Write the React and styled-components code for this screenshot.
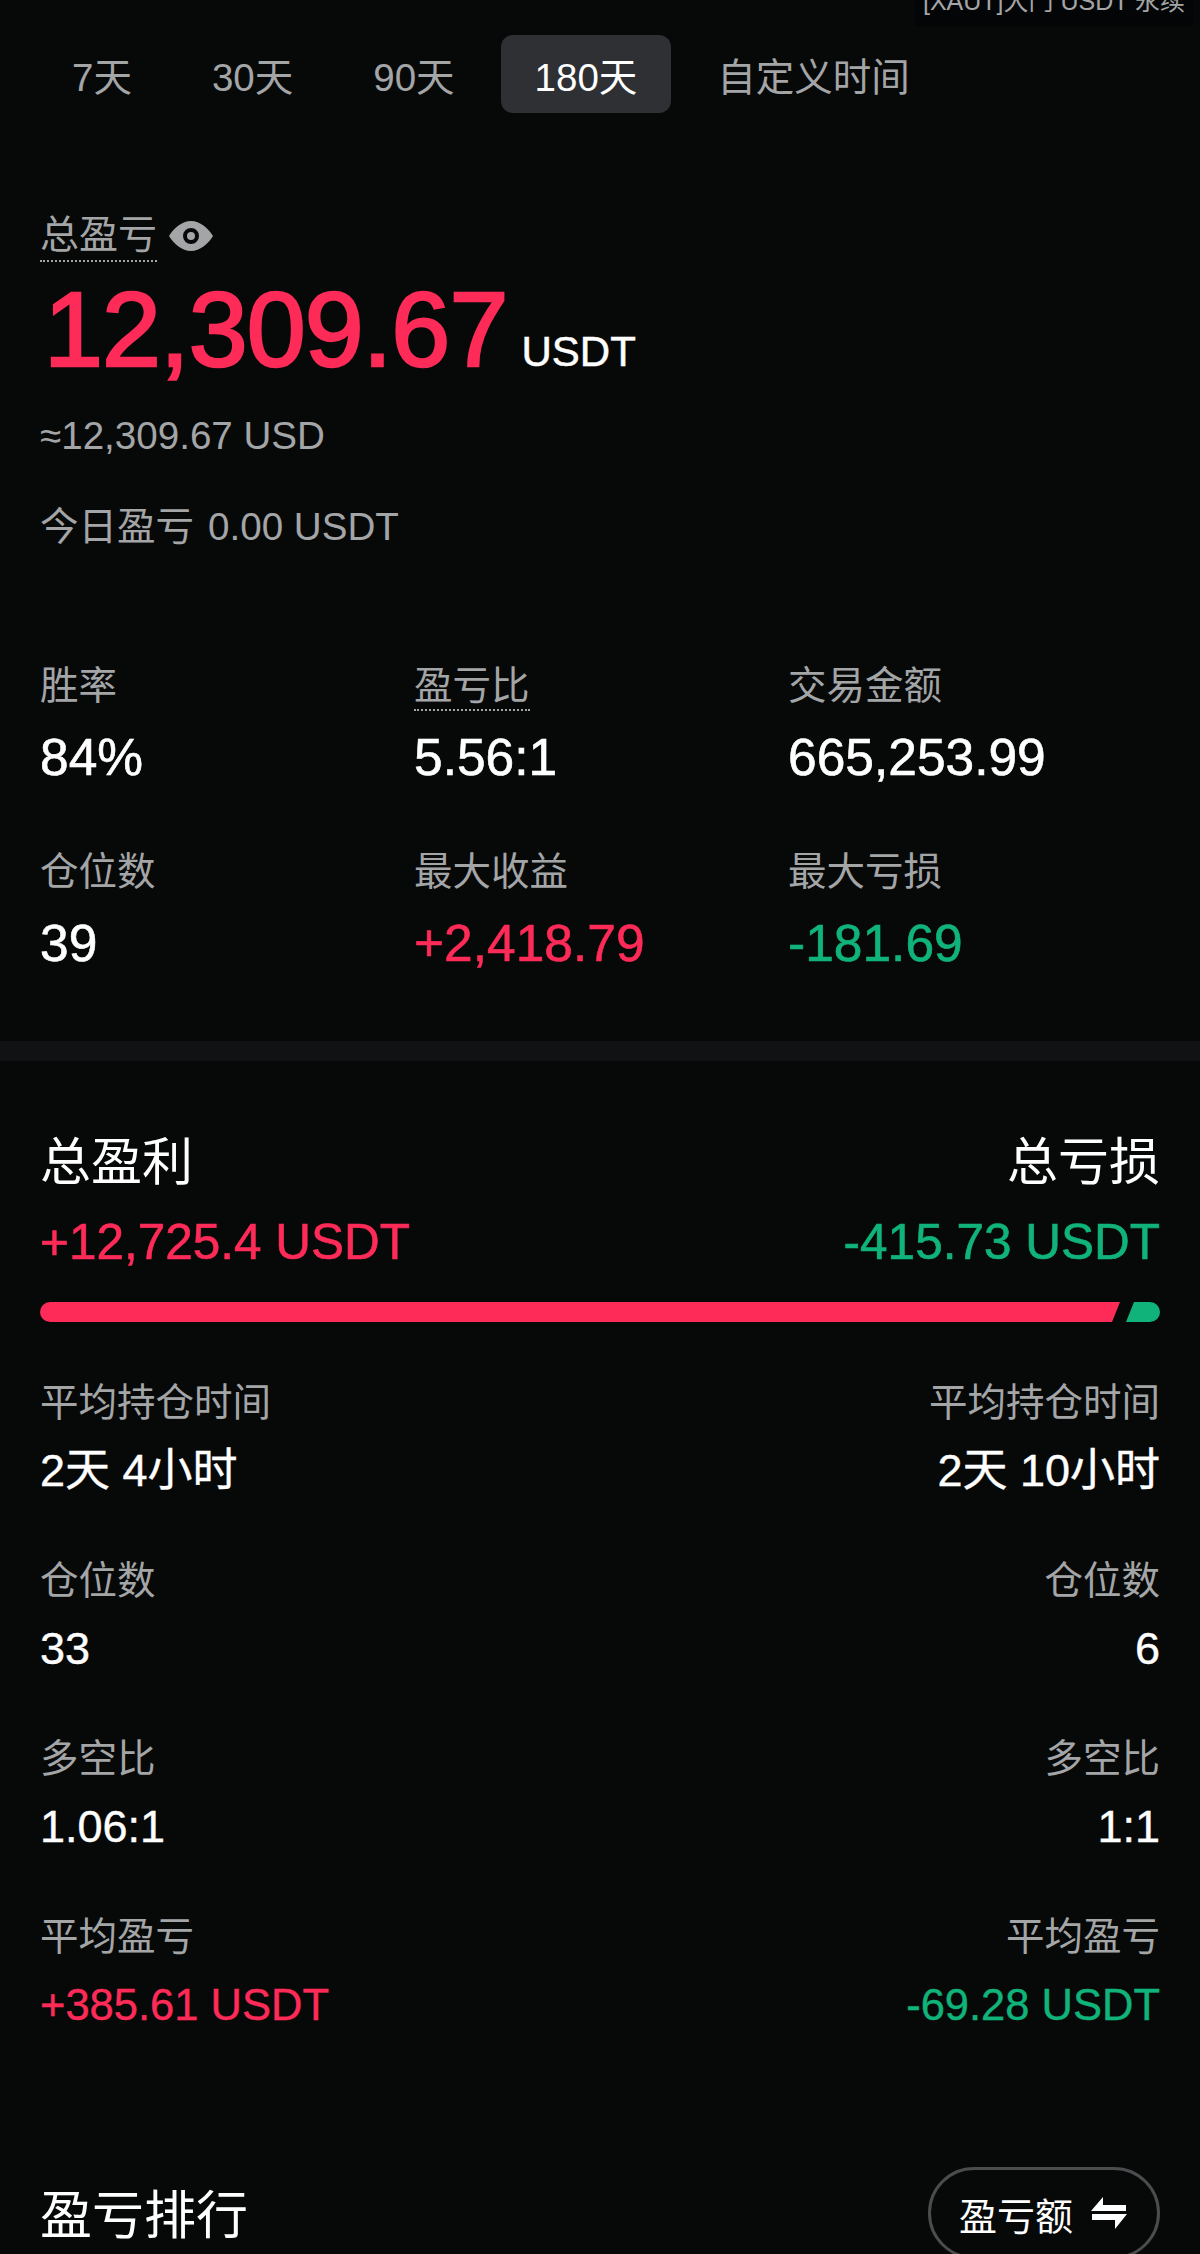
import React from 'react';
import styled, { createGlobalStyle } from 'styled-components';

const RED = '#fe2b58';
const GREEN = '#10b47a';
const GREY = '#a3a5a7';
const BG = '#070909';

const GlobalStyle = createGlobalStyle`
  html, body { margin: 0; padding: 0; background: ${BG}; }
  * { box-sizing: border-box; }
`;

const Page = styled.div`
  position: relative;
  width: 1200px;
  height: 2254px;
  overflow: hidden;
  background: ${BG};
  color: #fff;
  font-family: "Liberation Sans", "Noto Sans CJK SC", sans-serif;
`;

const ContractTag = styled.div`
  position: absolute;
  top: -14px;
  right: 7px;
  padding: 0 8px 10px;
  background: #040506;
  color: ${GREY};
  font-size: 25px;
  line-height: 30px;
`;

const Tabs = styled.div`
  display: flex;
  align-items: center;
  gap: 12px;
  padding: 35px 0 0 38px;
  height: 113px;
`;

const Tab = styled.div`
  height: 78px;
  padding: 0 34px;
  display: flex;
  align-items: center;
  border-radius: 12px;
  font-size: 38.5px;
  color: ${p => (p.$active ? '#fff' : GREY)};
  background: ${p => (p.$active ? '#2e3033' : 'transparent')};
`;

const Summary = styled.section`
  padding: 97px 40px 0;
`;

const TitleRow = styled.div`
  display: flex;
  align-items: center;
  gap: 12px;
`;

const DottedLabel = styled.span`
  display: inline-block;
  color: ${GREY};
  font-size: 39px;
  line-height: 50px;
  border-bottom: 2px dotted ${GREY};
`;

const Total = styled.div`
  display: flex;
  align-items: baseline;
  margin-top: 12px;
  height: 110px;
  padding-left: 4px;
`;

const TotalNumber = styled.span`
  color: ${RED};
  font-size: 106px;
  line-height: 110px;
  letter-spacing: -0.9px;
  -webkit-text-stroke: 2.5px currentColor;
`;

const TotalUnit = styled.span`
  margin-left: 14px;
  font-size: 42px;
  -webkit-text-stroke: 0.5px currentColor;
`;

const SubLine = styled.div`
  margin-top: ${p => p.$top}px;
  color: ${GREY};
  font-size: 38.6px;
  line-height: 44px;
`;

const TodayLabel = styled.span`
  font-size: 38.5px;
  margin-right: 14px;
`;

const StatGrid = styled.div`
  display: grid;
  grid-template-columns: 374px 374px 1fr;
  row-gap: 62px;
  margin-top: 112px;
`;

const StatLabel = styled.div`
  color: ${GREY};
  font-size: 38.5px;
  line-height: 50px;
  height: 50px;
`;

const DottedStat = styled.span`
  display: inline-block;
  height: 50px;
  border-bottom: 2px dotted ${GREY};
`;

const StatValue = styled.div`
  margin-top: 18px;
  font-size: 51.5px;
  line-height: 56px;
  color: ${p => p.$color || '#fff'};
  -webkit-text-stroke: 0.6px currentColor;
`;

const Band = styled.div`
  height: 20px;
  margin-top: 70px;
  background: #101213;
`;

const Compare = styled.section`
  padding: 70px 40px 0;
`;

const CompareRow = styled.div`
  display: flex;
  justify-content: space-between;
  margin-top: ${p => p.$top || 0}px;
`;

const Side = styled.div`
  text-align: ${p => (p.$right ? 'right' : 'left')};
`;

const SideTitle = styled.div`
  font-size: 51px;
  line-height: 64px;
`;

const SideAmount = styled.div`
  margin-top: 18px;
  font-size: 49.5px;
  line-height: 58px;
  color: ${p => p.$color};
  -webkit-text-stroke: 0.6px currentColor;
`;

const Bar = styled.div`
  display: flex;
  gap: 6px;
  height: 20px;
  margin-top: 31px;
`;

const BarGain = styled.div`
  flex: 1;
  background: ${RED};
  border-radius: 10px 0 0 10px;
  clip-path: polygon(0 0, 100% 0, calc(100% - 8px) 100%, 0 100%);
`;

const BarLoss = styled.div`
  width: 34px;
  background: ${GREEN};
  border-radius: 0 10px 10px 0;
  clip-path: polygon(8px 0, 100% 0, 100% 100%, 0 100%);
`;

const DetailLabel = styled.div`
  color: ${GREY};
  font-size: 38.5px;
  line-height: 50px;
`;

const DetailValue = styled.div`
  margin-top: 18px;
  font-size: ${p => (p.$color ? 43.5 : 45)}px;
  line-height: 50px;
  color: ${p => p.$color || '#fff'};
  -webkit-text-stroke: 0.4px currentColor;
`;

const RankHeader = styled.div`
  display: flex;
  align-items: center;
  justify-content: space-between;
  margin-top: 137px;
  height: 92px;
`;

const RankTitle = styled.div`
  margin-bottom: 4px;
  font-size: 52px;
`;

const SortButton = styled.div`
  display: flex;
  align-items: center;
  gap: 18px;
  height: 92px;
  width: 232px;
  padding-left: 28px;
  border: 3px solid #4a4c4e;
  border-radius: 46px;
  font-size: 38px;
`;

const EyeIcon = () => (
  <svg width="44" height="30" viewBox="0 0 44 30">
    <path fill={GREY} fillRule="evenodd" d="M0 15C5 7 13 0 22 0s17 7 22 15c-5 8-13 15-22 15S5 23 0 15Zm22-8a8 8 0 1 0 0 16 8 8 0 0 0 0-16Zm0 4a4 4 0 1 1 0 8 4 4 0 0 1 0-8Z" />
  </svg>
);

const SwapIcon = () => (
  <svg width="36" height="32" viewBox="0 0 36 32">
    <path fill="#fff" d="M12 0v8h23v6H0L12 0ZM1 17h35L24 32v-9H1v-6Z" />
  </svg>
);

const tabs = ['7天', '30天', '90天', '180天', '自定义时间'];

const stats = [
  { label: '胜率', value: '84%' },
  { label: '盈亏比', value: '5.56:1', dotted: true },
  { label: '交易金额', value: '665,253.99' },
  { label: '仓位数', value: '39' },
  { label: '最大收益', value: '+2,418.79', color: RED },
  { label: '最大亏损', value: '-181.69', color: GREEN },
];

const details = [
  { label: '平均持仓时间', left: '2天 4小时', right: '2天 10小时' },
  { label: '仓位数', left: '33', right: '6' },
  { label: '多空比', left: '1.06:1', right: '1:1' },
  { label: '平均盈亏', left: '+385.61 USDT', right: '-69.28 USDT', colored: true },
];

const App = () => {
  return (
    <Page>
      <GlobalStyle />
      <ContractTag>[XAUT]大门 USDT 永续</ContractTag>
      <Tabs>
        {tabs.map(t => (
          <Tab key={t} $active={t === '180天'}>{t}</Tab>
        ))}
      </Tabs>
      <Summary>
        <TitleRow>
          <DottedLabel>总盈亏</DottedLabel>
          <EyeIcon />
        </TitleRow>
        <Total>
          <TotalNumber>12,309.67</TotalNumber>
          <TotalUnit>USDT</TotalUnit>
        </Total>
        <SubLine $top={30}>≈12,309.67 USD</SubLine>
        <SubLine $top={47}><TodayLabel>今日盈亏</TodayLabel>0.00 USDT</SubLine>
        <StatGrid>
          {stats.map(s => (
            <div key={s.label}>
              <StatLabel>{s.dotted ? <DottedStat>{s.label}</DottedStat> : s.label}</StatLabel>
              <StatValue $color={s.color}>{s.value}</StatValue>
            </div>
          ))}
        </StatGrid>
      </Summary>
      <Band />
      <Compare>
        <CompareRow>
          <Side>
            <SideTitle>总盈利</SideTitle>
            <SideAmount $color={RED}>+12,725.4 USDT</SideAmount>
          </Side>
          <Side $right>
            <SideTitle>总亏损</SideTitle>
            <SideAmount $color={GREEN}>-415.73 USDT</SideAmount>
          </Side>
        </CompareRow>
        <Bar>
          <BarGain />
          <BarLoss />
        </Bar>
        {details.map((d, i) => (
          <CompareRow key={d.label} $top={i === 0 ? 56 : 60}>
            <Side>
              <DetailLabel>{d.label}</DetailLabel>
              <DetailValue $color={d.colored ? RED : undefined}>{d.left}</DetailValue>
            </Side>
            <Side $right>
              <DetailLabel>{d.label}</DetailLabel>
              <DetailValue $color={d.colored ? GREEN : undefined}>{d.right}</DetailValue>
            </Side>
          </CompareRow>
        ))}
        <RankHeader>
          <RankTitle>盈亏排行</RankTitle>
          <SortButton>盈亏额<SwapIcon /></SortButton>
        </RankHeader>
      </Compare>
    </Page>
  );
};

export default App;
